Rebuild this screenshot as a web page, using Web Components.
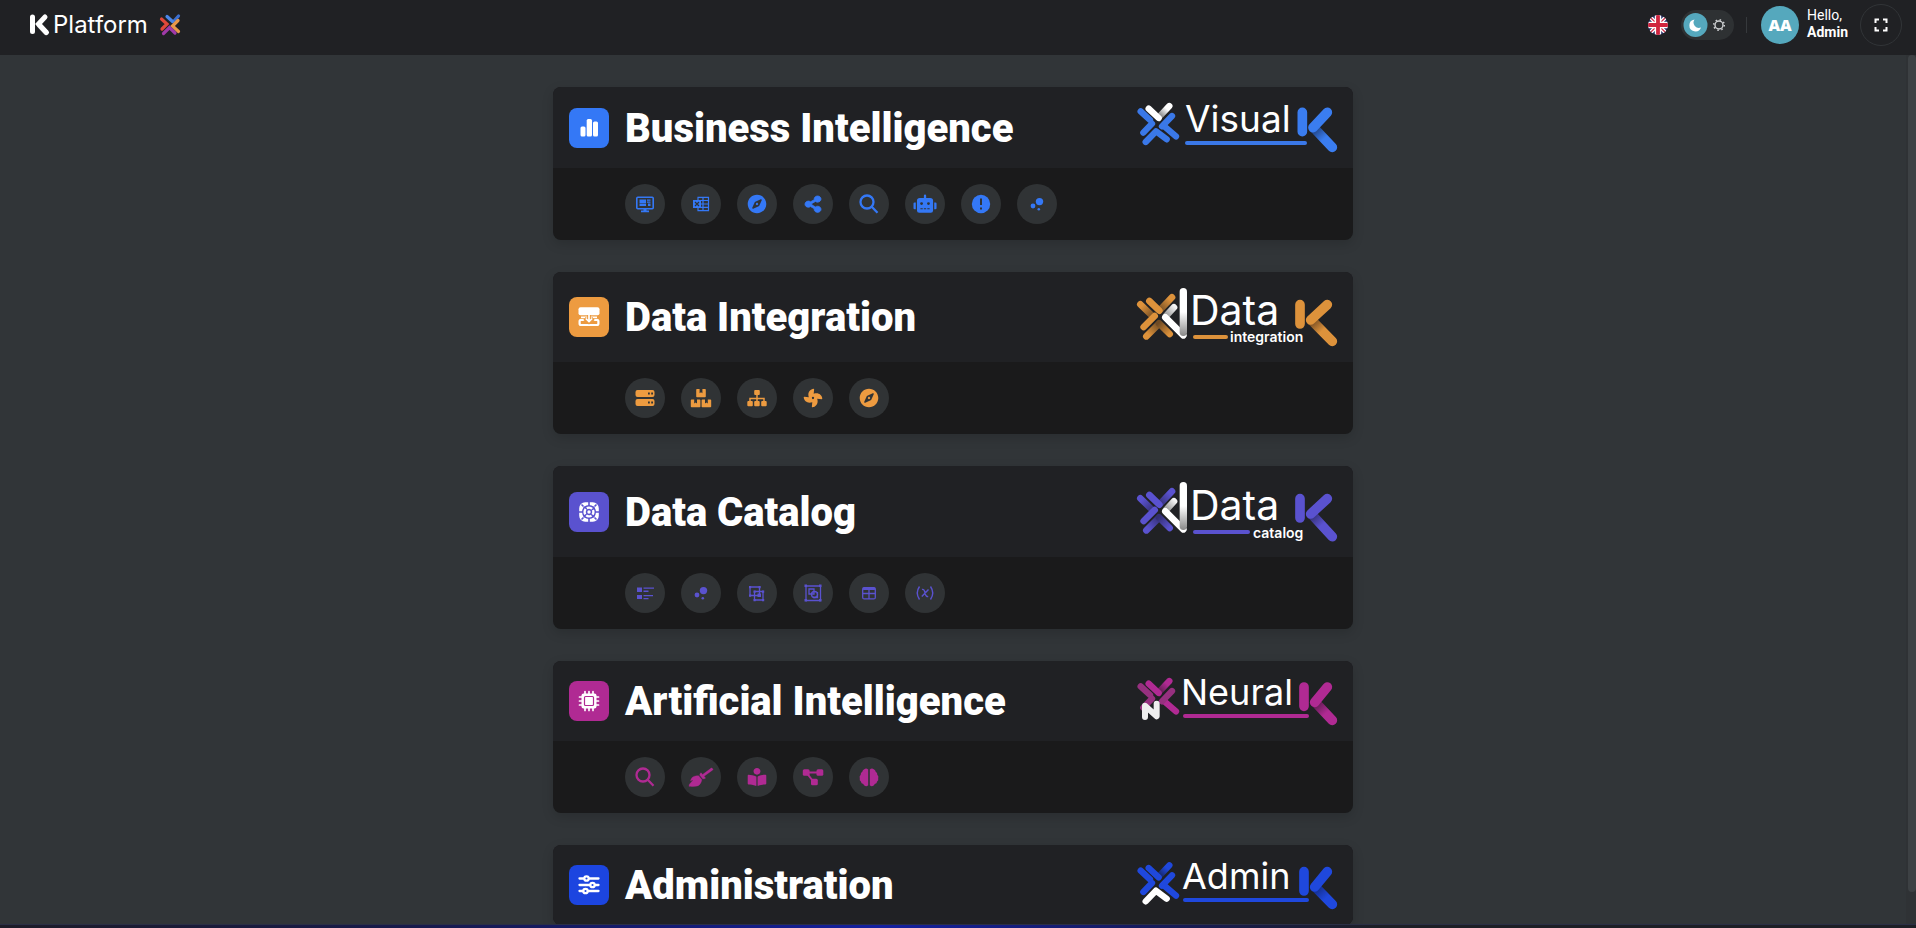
<!DOCTYPE html>
<html lang="en">
<head>
<meta charset="utf-8">
<title>K Platform</title>
<style>
  html, body { height: 100%; }
  body { margin: 0; background: #313538; color: #fff; font-family: Roboto, sans-serif; overflow: hidden; }
</style>
</head>
<body>
<k-platform></k-platform>

<script>
const ICONS = {
  bars: '<rect x="11.500" y="18.500" width="5" height="10" rx="1.500"/><rect x="17.700" y="11" width="5.300" height="17.500" rx="1.500"/><rect x="24" y="13.500" width="5" height="15" rx="1.500"/>',
  integration: '<rect x="9.500" y="10.300" width="21" height="8" rx="2"/><g fill="none" stroke="currentColor" stroke-width="2.200"><rect x="10.600" y="22.800" width="18.800" height="5.200" rx="1.500"/><path stroke-width="1.600" d="M12 20.300h16"/></g><path d="M20 18v3.500M15.500 21.500L20 25l4.500-3.500" fill="none" stroke="var(--tile)" stroke-width="3.800"/><path d="M20 18v6M16.800 21.500l3.200 3 3.200-3" fill="none" stroke="currentColor" stroke-width="1.700"/>',
  catalog: '<g fill="none" stroke="currentColor"><rect x="12.200" y="12.200" width="15.600" height="15.600" rx="4" stroke-width="4"/></g><g fill="none" stroke="var(--tile)" stroke-width="1.600"><path d="M20 9v5M20 26v5M9 20h5M26 20h5M12.500 12.500l2 2M27.500 12.500l-2 2M12.500 27.500l2-2M27.500 27.500l-2-2"/></g><circle cx="20" cy="20" r="7" fill="var(--tile)"/><circle cx="20" cy="20" r="4.400" fill="none" stroke="currentColor" stroke-width="2.400" stroke-dasharray="5.600 1.310" stroke-dashoffset="2.800"/><circle cx="20" cy="20" r="1.700"/>',
  chip: '<rect x="12.500" y="12.500" width="15" height="15" rx="2"/><g stroke="currentColor" stroke-width="1.700" stroke-linecap="round"><path d="M16 10.500v19M20 10.500v19M24 10.500v19M10.500 16h19M10.500 20h19M10.500 24h19"/></g><rect x="15.500" y="15.500" width="9" height="9" rx="1" fill="none" stroke="var(--tile)" stroke-width="1.200"/>',
  sliders: '<g fill="none" stroke="currentColor" stroke-width="2.300" stroke-linecap="round"><path d="M10.500 13.500h4M20.500 13.500h9M10.500 20h10M26.500 20h3M10.500 26h3.500M19.500 26h10"/><circle cx="17.500" cy="13.500" r="2.200"/><circle cx="23.500" cy="20" r="2.200"/><circle cx="16.500" cy="26" r="2.200"/></g>',
  monitor: '<g fill="none" stroke="currentColor" stroke-width="1.600"><rect x="11.800" y="13.200" width="16.400" height="11.600" rx="1"/></g><path d="M14.500 15.500h6.500v3.500h-6.500zM22 15.500h3.500v1.200H22zM22 17.500h3.500v1.200H22zM14.500 19.500h6.500v2.500h-6.500zM23 19.500h2.500v2.500H23zM18.500 24.500h3v2h2.500v1.800h-8v-1.800h2.500z"/>',
  excel: '<g fill="none" stroke="currentColor" stroke-width="1.200"><path d="M17 13.300h10.500v13.400H17zM22 13v14M17 16.500h10.500M17 20h10.500M17 23.400h10.500"/></g><rect x="12" y="16" width="8" height="8"/><path d="M14 18l4 4M18 18l-4 4" stroke="#303335" stroke-width="1.200"/>',
  compass: '<g transform="translate(10.700 10.400) scale(.0375)"><path d="M225.380 233.370c-12.500 12.500-12.500 32.760 0 45.250 12.490 12.500 32.760 12.500 45.250 0 12.500-12.500 12.500-32.760 0-45.250-12.500-12.490-32.760-12.490-45.250 0zM248 8C111.030 8 0 119.030 0 256s111.030 248 248 248 248-111.030 248-248S384.970 8 248 8zm126.140 148.050L308.170 300.400a31.938 31.938 0 0 1-15.770 15.770l-144.340 65.970c-16.650 7.610-33.810-9.550-26.200-26.200l65.980-144.350a31.938 31.938 0 0 1 15.770-15.770l144.340-65.970c16.650-7.600 33.800 9.550 26.190 26.200z"/></g>',
  share: '<g transform="translate(12 12) scale(.0357 .032)"><path stroke="currentColor" stroke-width="24" d="M352 320c-22.608 0-43.387 7.819-59.790 20.895l-102.486-64.054a96.551 96.551 0 0 0 0-41.683l102.486-64.054C308.613 184.181 329.392 192 352 192c53.019 0 96-42.981 96-96S405.019 0 352 0s-96 42.981-96 96c0 7.158.79 14.130 2.276 20.841L155.790 180.895C139.387 167.819 118.608 160 96 160c-53.019 0-96 42.981-96 96s42.981 96 96 96c22.608 0 43.387-7.819 59.790-20.895l102.486 64.054A96.301 96.301 0 0 0 256 416c0 53.019 42.981 96 96 96s96-42.981 96-96-42.981-96-96-96z"/></g>',
  search: '<g fill="none" stroke="currentColor" stroke-width="2.300"><circle cx="18" cy="18" r="6.500"/><path d="M22.500 22.500l6 6.200"/></g>',
  robot: '<g transform="translate(8.500 10.500) scale(.036 .0355)"><path d="M32 224H64V416H32A32 32 0 0 1 0 384V256A32 32 0 0 1 32 224Zm512-48V448a64 64 0 0 1-64 64H160a64 64 0 0 1-64-64V176a80 80 0 0 1 80-80H288V32a32 32 0 0 1 64 0V96H464A80 80 0 0 1 544 176ZM264 256a40 40 0 1 0-40 40A40 40 0 0 0 264 256Zm-8 128H192v32h64Zm96 0H288v32h64ZM456 256a40 40 0 1 0-40 40A40 40 0 0 0 456 256Zm-8 128H384v32h64ZM640 256V384a32 32 0 0 1-32 32H576V224h32A32 32 0 0 1 640 256Z"/></g>',
  alert: '<circle cx="20" cy="20" r="9.200"/><path d="M20 14.500v6.500M20 23.500v2" stroke="#303335" stroke-width="2"/>',
  bubbles: '<circle cx="22.500" cy="17.600" r="3.700"/><circle cx="16" cy="22" r="2.400"/><circle cx="21.800" cy="25.200" r="1.300"/>',
  server: '<path fill-rule="evenodd" d="M12.500 12h15a2 2 0 0 1 2 2v3a2 2 0 0 1-2 2h-15a2 2 0 0 1-2-2v-3a2 2 0 0 1 2-2zm10.500 2.600v1.800h1.800v-1.800zm3.200 0v1.800H28v-1.800zM12.500 21h15a2 2 0 0 1 2 2v3a2 2 0 0 1-2 2h-15a2 2 0 0 1-2-2v-3a2 2 0 0 1 2-2zm10.500 2.600v1.800h1.800v-1.800zm3.200 0v1.800H28v-1.800z"/>',
  boxes: '<path d="M16 11h2.600v4.200l1.400-1 1.400 1V11H24a.8.8 0 0 1 .8.8v6.600a.8.8 0 0 1-.8.8h-8a.8.8 0 0 1-.8-.8v-6.600A.8.8 0 0 1 16 11zM10.600 21.500h2.600v4l1.400-1 1.400 1v-4h2.600a.8.8 0 0 1 .8.8v6.100a.8.8 0 0 1-.8.8h-8a.8.8 0 0 1-.8-.8v-6.100a.8.8 0 0 1 .8-.8zM21.400 21.500H24v4l1.400-1 1.400 1v-4h2.600a.8.8 0 0 1 .8.8v6.100a.8.8 0 0 1-.8.8h-8a.8.8 0 0 1-.8-.8v-6.100a.8.8 0 0 1 .8-.8z"/>',
  sitemap: '<rect x="17.200" y="12" width="5.600" height="5" rx="1"/><path fill="none" stroke="currentColor" stroke-width="1.500" d="M20 16v8M13 24v-3.500h14V24"/><rect x="10.300" y="23" width="5.500" height="5.200" rx="1"/><rect x="17.200" y="23" width="5.500" height="5.200" rx="1"/><rect x="24.200" y="23" width="5.500" height="5.200" rx="1"/>',
  fan: '<g transform="translate(10.700 10.700) scale(.0363)"><path d="M352.570 128c-28.090 0-54.090 4.520-77.060 12.860l12.410-123.110C289 7.310 279.810-1.180 269.330.13 189.630 10.130 128 77.640 128 159.430c0 28.090 4.520 54.090 12.860 77.060L17.750 224.080C7.310 223-1.180 232.190.13 242.670c10 79.700 77.510 141.330 159.300 141.330 28.090 0 54.090-4.520 77.060-12.860l-12.410 123.110c-1.050 10.430 8.110 18.930 18.590 17.620 79.700-10 141.330-77.510 141.330-159.300 0-28.090-4.520-54.090-12.860-77.060l123.110 12.410c10.440 1.050 18.930-8.110 17.620-18.590-10-79.700-77.510-141.330-159.300-141.330zM256 288a32 32 0 1 1 32-32 32 32 0 0 1-32 32z"/></g>',
  list: '<path d="M12 14.500h5v4.500h-5zM12 22h5v4h-5zM18.500 14.500H29v1.300H18.500zM18.500 17.600h5v1.300h-5zM18.500 22H28v1.300h-9.500zM18.500 25h5v1.300h-5z"/>',
  overlap: '<g fill="none" stroke="currentColor" stroke-width="1.300"><path d="M13 14h9.500v8.500H13zM17.500 18.500H26V27h-8.500z"/></g><path d="M12 13h2.200v2.200H12zM21.500 13h2.200v2.200h-2.200zM12 21.500h2.200v2.200H12zM16.500 17.500h2.200v2.200h-2.200zM25 17.500h2.200v2.200H25zM16.500 26h2.200v2.200h-2.200zM25 26h2.200v2.200H25zM20.500 20.500h3.500V24h-3.500z"/>',
  group: '<g fill="none" stroke="currentColor" stroke-width="1.300"><path d="M13 13h14.500v14.500H13z"/><path d="M16 16h5v5h-5zM20 24.500h4.500V19"/><circle cx="21.500" cy="21.500" r="3"/></g><path d="M11.500 11.500H14V14h-2.500zM26 11.500h2.500V14H26zM11.500 26H14v2.500h-2.500zM26 26h2.500v2.500H26z"/>',
  table: '<g fill="none" stroke="currentColor" stroke-width="1.300"><rect x="13.700" y="14.700" width="12.600" height="11.200" rx="1.500"/><path d="M13.700 20.500h12.600M20 16v10"/></g><rect x="13.700" y="14.500" width="12.600" height="2.600" rx="1"/>',
  variable: '<g fill="none" stroke="currentColor" stroke-width="1.400"><path d="M14.500 13.500q-4.500 6.500 0 13M25.500 13.500q4.500 6.500 0 13M17 16.500q1.700-.6 2.500 1.500l1.200 4q.8 2 2.500 1.300M23.500 16.500L16.800 23.500"/></g>',
  broom: '<g transform="translate(8 11) scale(.0375 .036)"><path stroke="currentColor" stroke-width="10" d="M256.470 216.770l86.730 109.180s-16.600 102.360-76.570 150.120C206.660 523.850 0 510.190 0 510.190s3.800-23.140 11-55.430l94.620-112.170c3.970-4.700-.87-11.620-6.650-9.500l-60.400 22.090c14.440-41.660 32.720-80.040 54.600-97.470 59.970-47.760 163.300-40.940 163.300-40.940zM636.530 31.030l-19.860-25c-5.490-6.900-15.520-8.050-22.410-2.560l-232.480 177.800-34.140-42.970c-5.090-6.410-15.140-5.210-18.590 2.210l-25.330 54.550 86.730 109.180 58.800-12.450c8-1.690 11.420-11.200 6.340-17.600l-34.090-42.920 232.480-177.800c6.890-5.480 8.040-15.530 2.550-22.440z"/></g>',
  reader: '<g transform="translate(10.700 11) scale(.0363 .035)"><path d="M352 96c0-53.020-42.980-96-96-96s-96 42.980-96 96 42.980 96 96 96 96-42.980 96-96zM233.590 241.100c-59.330-36.320-155.430-46.300-203.790-49.050C13.550 191.130 0 203.510 0 219.140v222.800c0 14.330 11.590 26.280 26.490 27.050 43.660 2.290 131.990 10.680 193.040 41.430 9.370 4.720 20.480-1.710 20.480-11.870V252.560c-.01-4.670-2.320-8.950-6.420-11.460zm248.610-49.050c-48.350 2.740-144.460 12.730-203.780 49.050-4.100 2.510-6.410 6.960-6.410 11.630v245.790c0 10.190 11.140 16.630 20.540 11.900 61.040-30.720 149.320-39.110 192.970-41.400 14.900-.78 26.490-12.730 26.490-27.060V219.140c-.01-15.630-13.560-28.010-29.810-27.090z"/></g>',
  diagram: '<rect x="9.800" y="12.200" width="6.800" height="6.500" rx="1.500"/><rect x="23.500" y="12.200" width="6.800" height="6.500" rx="1.500"/><rect x="18" y="21.800" width="6.800" height="6.500" rx="1.500"/><path d="M15 15.500h10M14.500 17l5 6.500" fill="none" stroke="currentColor" stroke-width="2"/>',
  brain: '<path d="M19.200 12.500v15.800q-1.800 1.500-3.800.3-.8-.6-1-1.600-2.400-.3-2.500-2.600-1.700-1.100-1.100-3-.8-2 .9-3.600-.2-2.200 1.600-3 .2-2 2-2.600 1.800-1.700 3.900.3zM20.800 12.500v15.800q1.800 1.500 3.800.3.800-.6 1-1.600 2.400-.3 2.500-2.600 1.700-1.100 1.100-3 .8-2-.9-3.600.2-2.200-1.600-3-.2-2-2-2.600-1.800-1.700-3.900.3z"/>'
};

/* Brand marks share a drawing grid of three units to a pixel. */
function kShape(x, top, foot, c, dark) {
  const j = top + 46, id = 'k' + c.replace('#', '');
  return `<defs><linearGradient id="${id}" gradientUnits="userSpaceOnUse" x1="${x + 35}" y1="${j}" x2="${x + 65}" y2="${j + 34}"><stop offset="0" stop-color="${dark}"/><stop offset="1" stop-color="${c}"/></linearGradient></defs>
  <g fill="none" stroke-width="29" stroke-linecap="round"><path d="M${x + 34} ${j}L637 ${foot - 14}" stroke="url(#${id})"/><path d="M${x} ${top}V${top + 58}M622 ${top}L${x + 32} ${j}" stroke="${c}"/></g>`;
}
function xShape(y, a, left, right, bottom, dark) {
  const id = 'x' + a.replace('#', '') + y;
  return `<defs><linearGradient id="${id}" gradientUnits="userSpaceOnUse" x1="118" y1="${y + 36}" x2="140" y2="${y + 12}"><stop offset="0" stop-color="${dark}"/><stop offset="1" stop-color="${a}"/></linearGradient></defs>
  <g fill="none" stroke-width="19" stroke-linecap="round">
  <path d="M62 ${y + 20}L90 ${y + 46}" stroke="${left}"/>
  <path d="M134 ${y + 66}L168 ${y + 95}" stroke="${right}"/>
  <path d="M148 ${y + 4}L116 ${y + 38}" stroke="url(#${id})"/>
  <path d="M86 ${y + 12}L116 ${y + 40}" stroke="${a}"/>
  <path d="M70 ${y + 84}L96 ${y + 57}M156 ${y + 34}L126 ${y + 65}" stroke="${left}"/>
  <path d="M77 ${y + 112}L108 ${y + 80}L140 ${y + 104}" stroke="${bottom}" stroke-linejoin="round"/></g>`;
}
function dataX(c, dark) {
  const grad = (id, x1, y1, x2, y2) => `<linearGradient id="${id}" gradientUnits="userSpaceOnUse" x1="${x1}" y1="${y1}" x2="${x2}" y2="${y2}"><stop offset="0" stop-color="${c}"/><stop offset="1" stop-color="${dark}"/></linearGradient>`;
  return `<defs><linearGradient id="dw" x1="0" y1="0" x2="0" y2="1"><stop offset=".5" stop-color="#fff"/><stop offset="1" stop-color="#888"/></linearGradient><linearGradient id="dv" gradientUnits="userSpaceOnUse" x1="164" y1="92" x2="140" y2="118"><stop offset="0" stop-color="#f4f4f4"/><stop offset="1" stop-color="#999"/></linearGradient>${grad('d1', 66, 90, 100, 122)}${grad('d2', 150, 70, 118, 104)}${grad('d3', 84, 175, 118, 142)}${grad('d4', 149, 174, 115, 142)}</defs>
  <g fill="none" stroke-width="20" stroke-linecap="round" stroke-linejoin="round">
  <path d="M61 85L92 115" stroke="url(#d1)"/><path d="M156 64L122 100" stroke="url(#d2)"/><path d="M79 181L112 148" stroke="url(#d3)"/><path d="M149 174L117 142" stroke="url(#d4)"/>
  <path d="M88 75L118 104M71 153L104 120" stroke="${c}"/>
  <path d="M162 94L138 120" stroke="url(#dv)"/><path d="M136 124L190 178" stroke="#fff"/></g><rect x="179" y="36" width="22" height="144" rx="11" fill="url(#dw)"/>`;
}
const word = (t, x, y, s) => `<text x="${x}" y="${y}" font-size="${s}" font-weight="400" fill="#fff" font-family="Inter, sans-serif">${t}</text>`;
const sub = (t, x, y) => `<text x="${x}" y="${y}" font-size="14" font-weight="600" fill="#fff" font-family="Inter, sans-serif">${t}</text>`;
const bar = (x1, x2, y, c) => `<path d="M${x1} ${y}H${x2}" stroke="${c}" stroke-width="4" stroke-linecap="round"/>`;
const art = (top, inner) => `<g transform="scale(.33333) translate(-51 ${-top})">${inner}</g>`;

const LOGOS = {
  visual: [49, art(51, xShape(56, '#ffffff', '#3a78e8', '#3a78e8', '#3a78e8', '#777777') + kShape(547, 79, 198, '#3a7df0', '#1d3a72')) + word('Visual', 48, 29, 37) + bar(50, 168, 40, '#3a78e8')],
  integration: [58, art(36, dataX('#dd923b', '#6e4a24') + kShape(540, 86, 210, '#dd923b', '#6a4522')) + word('Data', 53, 37, 41) + sub('integration', 93, 54) + bar(58, 89, 49, '#dd923b')],
  catalog: [59, art(36, dataX('#5a52cf', '#332f72') + kShape(540, 86, 214, '#5a52cf', '#302c6a')) + word('Data', 53, 38, 41) + sub('catalog', 116, 56) + bar(58, 111, 50, '#5a52cf')],
  neural: [48, art(34, xShape(42, '#b02a93', '#96307f', '#b02a93', 'none', '#5b1e4e') + '<path d="M75 154V120L110 152V114" fill="none" stroke="#eee" stroke-width="18" stroke-linecap="round" stroke-linejoin="round"/>' + kShape(552, 64, 178, '#b02a93', '#561a49')) + word('Neural', 44, 28, 36) + bar(48, 170, 39, '#b02a93')],
  admin: [48, art(37, xShape(46, '#1f48dd', '#1f48dd', '#1f48dd', '#ffffff', '#16245e') + kShape(552, 69, 181, '#1f48dd', '#132a80')) + word('Admin', 45, 28, 36) + bar(48, 170, 39, '#1f48dd')]
};

class KIcon extends HTMLElement {
  connectedCallback() {
    this.attachShadow({ mode: 'open' }).innerHTML = `<style>:host{display:block;width:40px;height:40px}svg{display:block;width:100%;height:100%}</style>
      <svg viewBox="0 0 40 40" fill="currentColor" aria-hidden="true">${ICONS[this.getAttribute('name')]}</svg>`;
  }
}
customElements.define('k-icon', KIcon);

class KLogo extends HTMLElement {
  connectedCallback() {
    const [h, inner] = LOGOS[this.getAttribute('name')];
    this.attachShadow({ mode: 'open' }).innerHTML = `<style>:host{display:block;flex:none}svg{display:block;overflow:visible}</style>
      <svg width="200" height="${h}" viewBox="0 0 200 ${h}">${inner}</svg>`;
  }
}
customElements.define('k-logo', KLogo);

class KTool extends HTMLElement {
  connectedCallback() {
    this.attachShadow({ mode: 'open' }).innerHTML = `<style>
      :host{display:block}
      button{display:block;width:40px;height:40px;padding:0;border:0;border-radius:50%;background:#303335;color:var(--accent);cursor:pointer}
      button:hover{background:#3c4043}</style>
      <button type="button" aria-label="${this.getAttribute('name')}"><k-icon name="${this.getAttribute('name')}"></k-icon></button>`;
  }
}
customElements.define('k-tool', KTool);

class KModule extends HTMLElement {
  connectedCallback() {
    this.attachShadow({ mode: 'open' }).innerHTML = `<style>
      :host{display:block;border-radius:8px;overflow:hidden;background:#1a1a1b;box-shadow:0 4px 12px rgba(0,0,0,.15);--tile:var(--accent)}
      header{display:flex;align-items:center;gap:16px;padding:16px;background:#202124}
      .tile{border-radius:8px;background:var(--accent);color:#fff}
      h2{flex:1;margin:0;padding-top:2px;font-size:40px;line-height:46px;font-weight:900;color:#fff;white-space:nowrap}
      nav{display:flex;gap:16px;padding:16px 16px 16px 72px}
      :host([plain]) nav{display:none}</style>
      <header><k-icon class="tile" name="${this.getAttribute('icon')}"></k-icon><h2><slot name="title"></slot></h2><k-logo name="${this.getAttribute('logo')}"></k-logo></header>
      <nav><slot></slot></nav>`;
  }
}
customElements.define('k-module', KModule);

class KHeader extends HTMLElement {
  connectedCallback() {
    this.attachShadow({ mode: 'open' }).innerHTML = `<style>
      :host{display:flex;align-items:center;justify-content:space-between;box-sizing:border-box;height:55px;padding:0 14px 6px 30px;background:#202124}
      a,svg{display:block}
      .right{display:flex;align-items:center}
      button{padding:0;border:0;background:none;color:#fff;cursor:pointer}
      .flag{width:20px;height:20px;border-radius:50%;overflow:hidden;margin-right:13px}
      label{display:grid;grid-template-columns:1fr 1fr;align-items:center;width:53px;height:30px;border-radius:15px;background:#2e3133;position:relative}
      input{position:absolute;inset:0;margin:0;opacity:0}
      .sep{width:1px;height:16px;margin:0 14px 0 12px;background:#36393c}
      .avatar{display:grid;place-items:center;width:38px;height:38px;border-radius:50%;background:#55a8bd;font:800 16px/20px "Open Sans",sans-serif}
      .who{margin:0 12px 0 8px;padding-bottom:2px;font-size:14px;line-height:17px}
      .who b{display:block}
      .full{width:42px;height:42px;box-sizing:border-box;border:1px solid #313437;border-radius:50%;display:grid;place-items:center}</style>
      <a href="#" aria-label="K Platform"><svg width="152" height="36" viewBox="0 -6 152 36">
        <g fill="none" stroke-width="5" stroke-linecap="round"><path d="M9 12L16 19.500" stroke="#bbb"/><path d="M2.500 4V18.500M15 4L8.500 11L16.500 19.500" stroke="#fff"/></g>
        <text x="23" y="20" font-family="Inter, sans-serif" font-size="24" font-weight="400" fill="#fff">Platform</text>
        <g fill="none" stroke-width="3.200" stroke-linecap="round"><path d="M144 8L148.500 3" stroke="#3c6fd0"/><path d="M137 3.500L142.500 8.500" stroke="#4a86e8"/><path d="M131.500 6L137 11L132 16" stroke="#e0483a"/><path d="M148 7.500L142.500 13L148.500 18.500" stroke="#e8984a"/><path d="M133.500 20.500L139.500 14.500L145 20" stroke="#a03aa8"/></g></svg></a>
      <div class="right">
        <button class="flag" type="button" aria-label="English"><svg width="20" height="20" viewBox="0 0 20 20"><rect width="20" height="20" fill="#28306b"/><path d="M0 0L20 20M20 0L0 20" stroke="#fff" stroke-width="4"/><path d="M0 0L20 20M20 0L0 20" stroke="#d0304c" stroke-width="1.300"/><path d="M10 0V20M0 10H20" stroke="#fff" stroke-width="6.400"/><path d="M10 0V20M0 10H20" stroke="#d0243f" stroke-width="3.800"/></svg></button>
        <label><input type="checkbox" checked aria-label="Dark theme"><svg width="53" height="30" viewBox="0 0 53 30"><circle cx="14.500" cy="15" r="12" fill="#55a8bd"/><path d="M13.500 9.500A6 6 0 1 0 20 17.500A5.400 5.400 0 0 1 13.500 9.500z" fill="#fff"/><circle cx="38" cy="15" r="4" fill="none" stroke="#cfd1d3" stroke-width="1.400"/><circle cx="38" cy="15" r="5.300" fill="none" stroke="#cfd1d3" stroke-width="1.500" stroke-dasharray="1.500 2.660"/></svg></label>
        <span class="sep"></span>
        <span class="avatar">AA</span>
        <span class="who">Hello,<b>Admin</b></span>
        <button class="full" type="button" aria-label="Full screen"><svg width="14" height="14" viewBox="0 0 14 14" fill="none" stroke="#fff" stroke-width="2"><path d="M1.500 5V1.500H5M9 1.500h3.500V5M12.500 9v3.500H9M5 12.500H1.500V9"/></svg></button>
      </div>`;
  }
}
customElements.define('k-header', KHeader);

class KScroll extends HTMLElement {
  connectedCallback() {
    const root = this.attachShadow({ mode: 'open' });
    root.innerHTML = `<style>
      :host{display:grid;grid-template-columns:1fr 10px;min-height:0}
      .view{overflow-y:auto;scrollbar-width:none;min-height:0}
      .rail{padding-left:2px;background:#2f3235}
      .thumb{border-radius:4px;background:#3d4144}</style>
      <div class="view"><slot></slot></div><div class="rail"><div class="thumb"></div></div>`;
    const view = root.querySelector('.view'), thumb = root.querySelector('.thumb');
    const update = () => {
      const h = view.clientHeight, k = h / view.scrollHeight;
      thumb.style.height = Math.round(h * k) + 'px';
      thumb.style.transform = `translateY(${Math.round(view.scrollTop * k)}px)`;
    };
    view.addEventListener('scroll', update);
    new ResizeObserver(update).observe(view);
    requestAnimationFrame(update);
  }
}
customElements.define('k-scroll', KScroll);

const MODULES = [
  ['Business Intelligence', 'bars', 'visual', '#3478f6', ['monitor', 'excel', 'compass', 'share', 'search', 'robot', 'alert', 'bubbles']],
  ['Data Integration', 'integration', 'integration', '#ed9b40', ['server', 'boxes', 'sitemap', 'fan', 'compass']],
  ['Data Catalog', 'catalog', 'catalog', '#5a52cf', ['list', 'bubbles', 'overlap', 'group', 'table', 'variable']],
  ['Artificial Intelligence', 'chip', 'neural', '#b02a93', ['search', 'broom', 'reader', 'diagram', 'brain']],
  ['Administration', 'sliders', 'admin', '#1c45e0', []]
];

class KPlatform extends HTMLElement {
  connectedCallback() {
    this.attachShadow({ mode: 'open' }).innerHTML = `<style>
      :host{display:flex;flex-direction:column;height:100vh}
      k-scroll{flex:1}
      main{display:grid;gap:32px;max-width:800px;margin:0 auto;padding:32px 0}
      .glow{height:4px;box-sizing:border-box;border-top:1px solid #2b2f45;background:linear-gradient(90deg,#1d1c28 0%,#171a4c 22%,#141a70 34%,#1420a0 46%,#151a5c 60%,#1d1f26 72%)}</style>
      <k-header></k-header>
      <k-scroll><main>${MODULES.map(([t, i, l, c, tools]) => `<k-module icon="${i}" logo="${l}" style="--accent:${c}"${tools.length ? '' : ' plain'}><span slot="title">${t}</span>${tools.map(n => `<k-tool name="${n}"></k-tool>`).join('')}</k-module>`).join('')}</main></k-scroll>
      <div class="glow"></div>`;
  }
}
customElements.define('k-platform', KPlatform);
</script>
</body>
</html>
